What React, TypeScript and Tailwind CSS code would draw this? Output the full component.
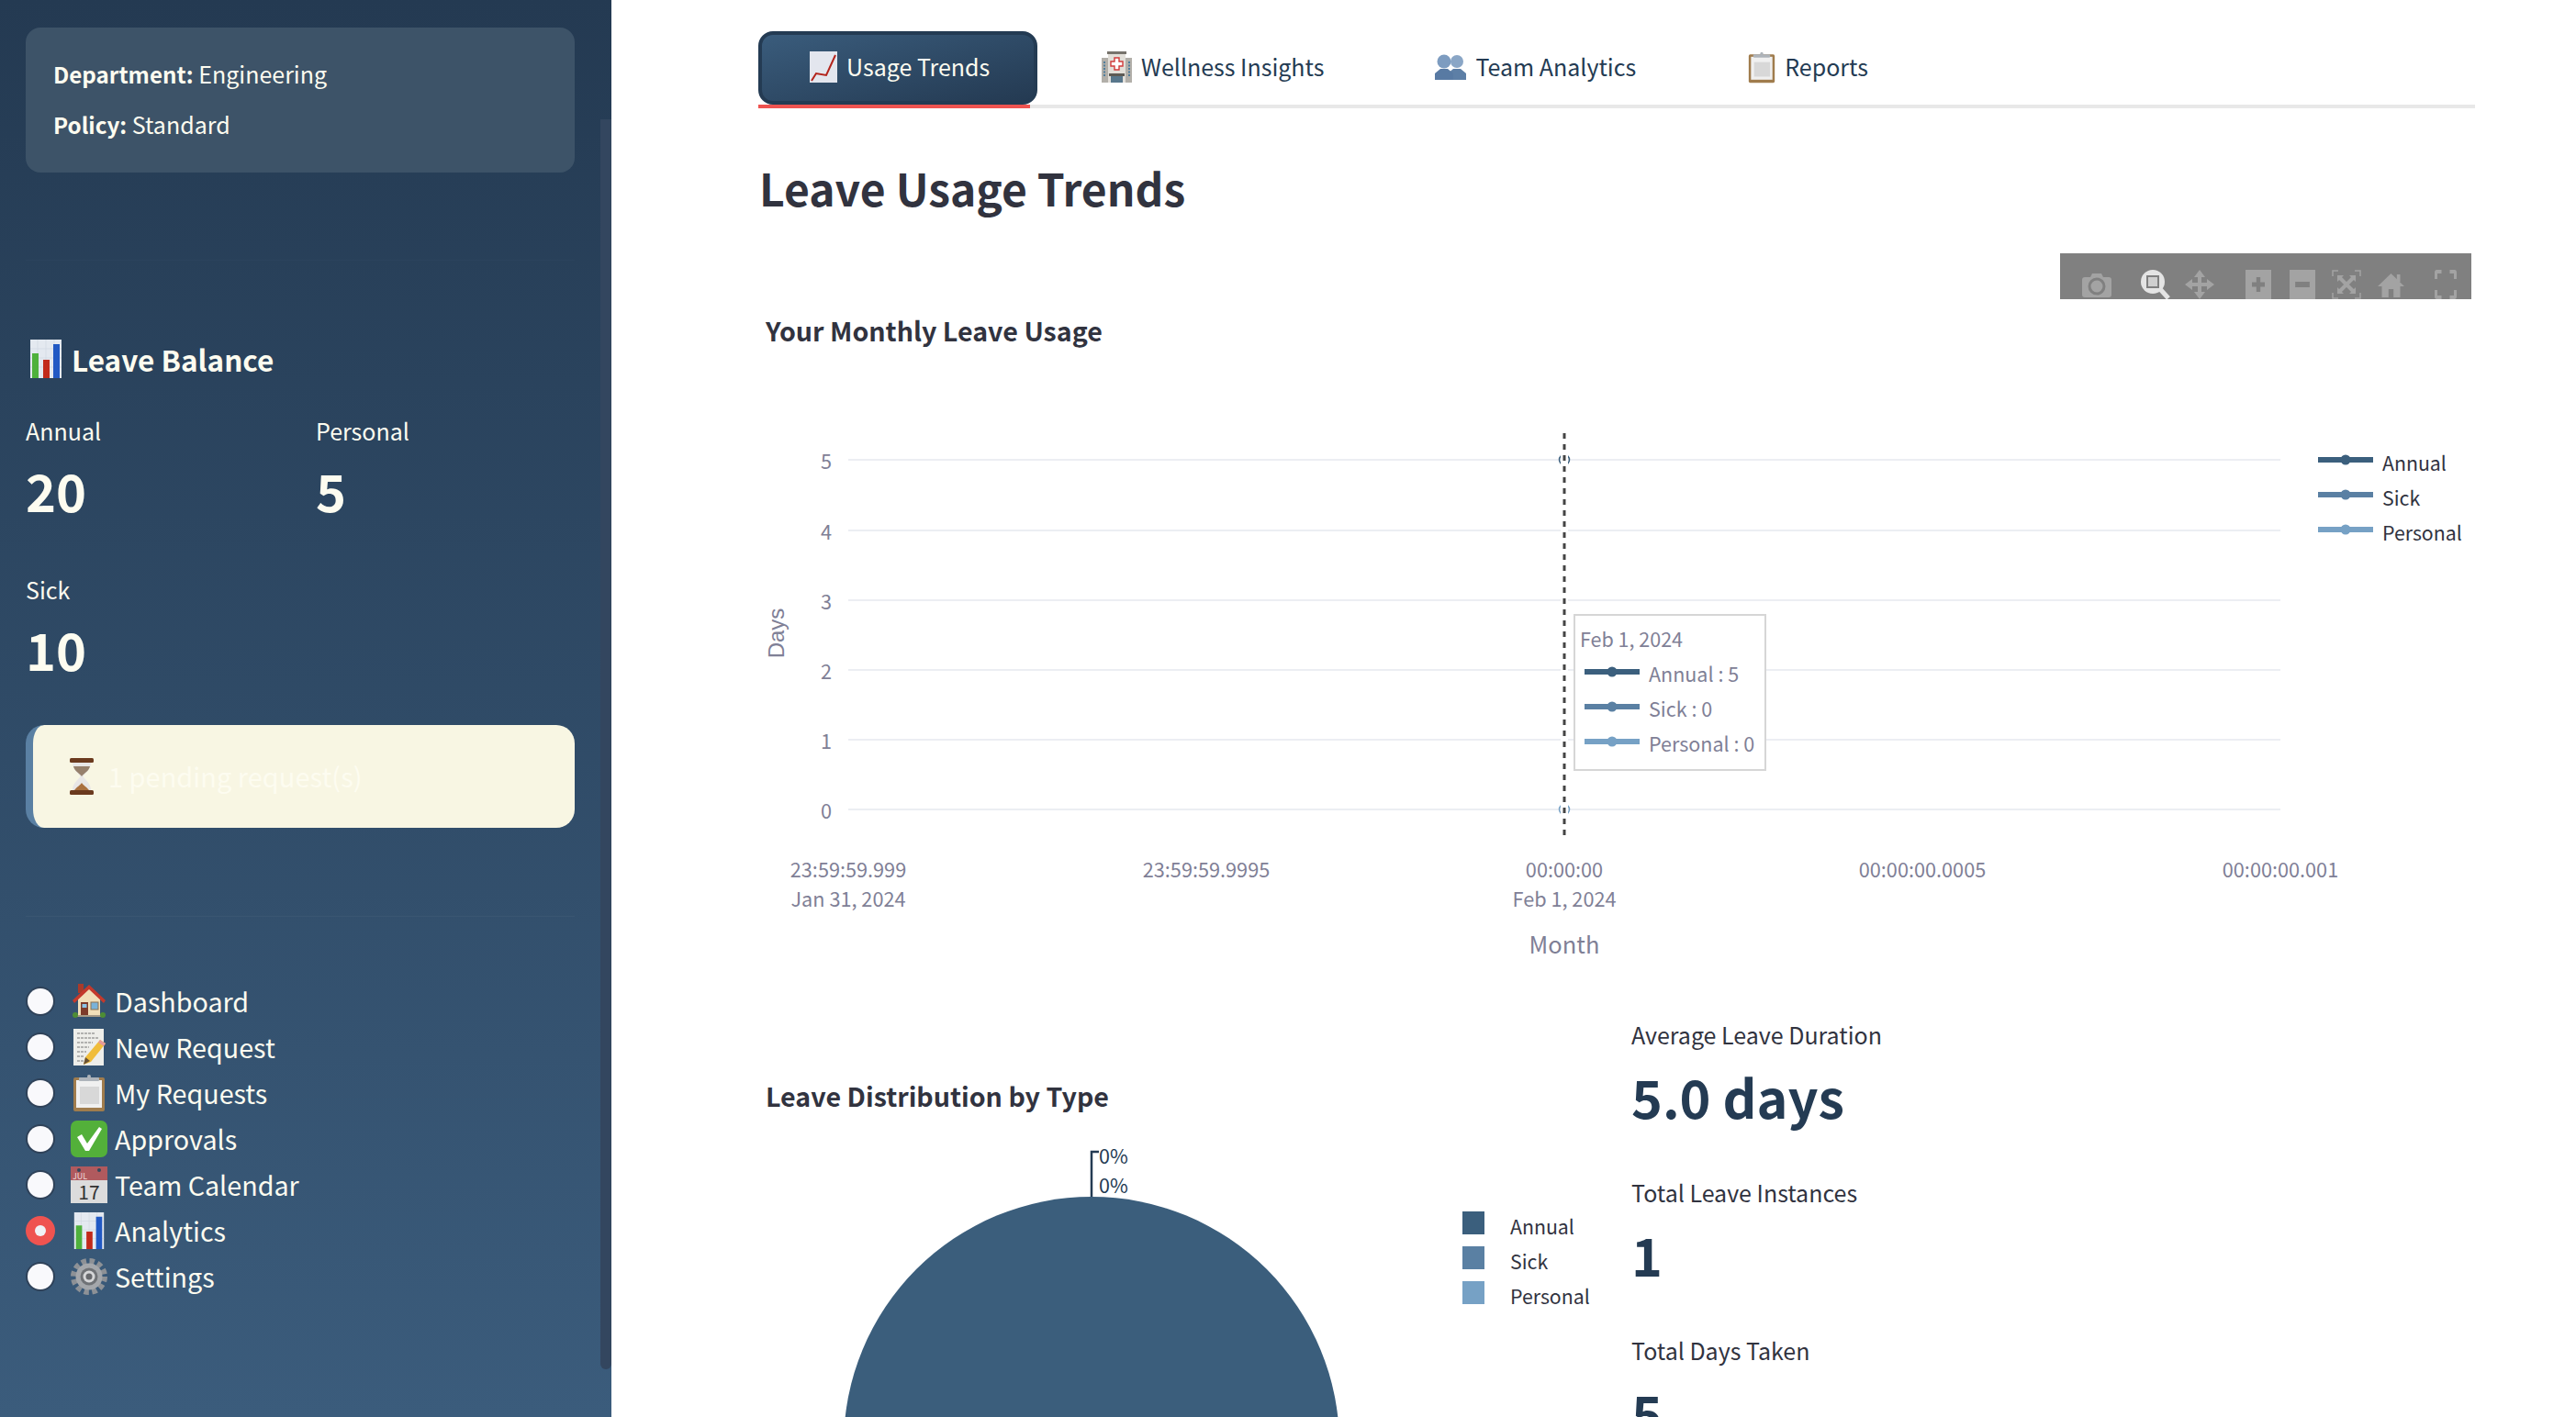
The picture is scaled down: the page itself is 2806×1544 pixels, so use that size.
const lineColors = ['#3b5f7d', '#5a80a3', '#76a1c5']

function BarsEmoji({ className }: { className: string }) {
  return (
    <svg viewBox="0 0 36 42" className={className}>
      <rect x="1" y="0" width="34" height="42" fill="#e4e9f0" />
      <path d="M1 10H35M1 20H35M1 30H35M9 0V42M18 0V42M27 0V42" stroke="#cfd6e0" strokeWidth="0.6" />
      <rect x="3" y="15" width="7" height="27" fill="#4fb13c" />
      <rect x="15" y="22" width="7" height="20" fill="#c22a1a" />
      <rect x="26" y="5" width="7" height="37" fill="#2159c4" />
    </svg>
  )
}

function Hourglass() {
  return (
    <svg viewBox="0 0 28 40" className="h-[40px] w-[28px] shrink-0">
      <path d="M4 5H24C24 13 17 17 15.5 20C17 23 24 27 24 35H4C4 27 11 23 12.5 20C11 17 4 13 4 5Z" fill="#e8e6e6" />
      <path d="M5 9H23C22 14 16 17 14 20C12 17 6 14 5 9Z" fill="#96806c" />
      <path d="M6 35C9 31 12 30 14 27C16 30 19 31 22 35Z" fill="#a9703f" />
      <rect x="1" y="0" width="26" height="5" rx="1.5" fill="#6b3a1e" />
      <rect x="1" y="35" width="26" height="5" rx="1.5" fill="#6b3a1e" />
    </svg>
  )
}

function House() {
  return (
    <svg viewBox="0 0 36 40" className="h-full w-full">
      <rect x="6" y="1" width="6" height="10" fill="#a93a2a" />
      <path d="M6 17L18 5L30 17V36H6Z" fill="#f2dfb9" />
      <path d="M18 2L0 19L2 22L18 7L34 22L36 19Z" fill="#c4392c" />
      <rect x="9" y="21" width="8" height="15" fill="#7d3b2a" />
      <rect x="10.5" y="23" width="5" height="4" fill="#8cc4e6" />
      <rect x="20" y="21" width="8" height="8" fill="#7ab2d8" stroke="#8d7350" />
      <rect x="5" y="35" width="26" height="2" fill="#a79a86" />
      <circle cx="3" cy="35" r="3" fill="#4d8d35" />
      <circle cx="33" cy="35" r="3" fill="#4d8d35" />
    </svg>
  )
}

function Memo() {
  return (
    <svg viewBox="0 0 36 40" className="h-full w-full">
      <rect x="1" y="0" width="33" height="40" fill="#eeeeea" />
      <path d="M5 5H25M5 10H28M5 15H22M5 20H18M5 25H15M5 30H13M5 35H12" stroke="#777" strokeWidth="1" strokeDasharray="3 1" />
      <path d="M30 12L36 16L20 36L12 39L14 31Z" fill="#f0bd3a" />
      <path d="M30 12L36 16L34 19L28 15Z" fill="#e59a9a" />
      <path d="M12 39L14 31L19 35Z" fill="#6b5335" />
    </svg>
  )
}

function Clipboard() {
  return (
    <svg viewBox="0 0 36 40" className="h-full w-full">
      <rect x="1" y="3" width="34" height="37" rx="2" fill="#a07c4d" />
      <rect x="4" y="6" width="28" height="30" fill="#f0f0f0" />
      <rect x="8" y="13" width="21" height="19" fill="#d8d8d8" />
      <rect x="7" y="3" width="22" height="4" rx="1" fill="#aeb4ba" />
      <circle cx="18" cy="2" r="2" fill="#aeb4ba" />
    </svg>
  )
}

function Check() {
  return (
    <svg viewBox="0 0 40 40" className="h-full w-full">
      <rect x="0" y="0" width="40" height="40" rx="7" fill="#53b03a" />
      <path d="M7 18L12 15L18 25L31 7L34 9L20 33H16Z" fill="#fff" />
    </svg>
  )
}

function Calendar() {
  return (
    <svg viewBox="0 0 40 40" className="h-full w-full">
      <rect width="40" height="40" fill="#dcdcdc" />
      <rect width="40" height="15" fill="#b05a5e" />
      <circle cx="9" cy="4" r="2" fill="#33485c" />
      <circle cx="31" cy="4" r="2" fill="#33485c" />
      <text x="2" y="14" className="fill-[#f0dcdc] text-[9px]">JUL</text>
      <text x="20" y="36" textAnchor="middle" className="fill-[#333] text-[21px]">17</text>
    </svg>
  )
}

function Gear() {
  return (
    <svg viewBox="0 0 40 40" className="h-full w-full">
      <circle cx="20" cy="20" r="16.5" fill="none" stroke="#8d9196" strokeWidth="7" strokeDasharray="5.2 3.44" />
      <circle cx="20" cy="20" r="14.5" fill="#a4a7ab" />
      <circle cx="20" cy="20" r="9.5" fill="#6f7276" />
      <circle cx="20" cy="20" r="6.5" fill="#d5d6d8" />
      <circle cx="20" cy="20" r="3.5" fill="#67696d" />
    </svg>
  )
}

function TrendEmoji() {
  return (
    <svg viewBox="0 0 30 34" className="h-[34px] w-[30px] shrink-0">
      <rect width="30" height="34" fill="#e3e6ee" />
      <path d="M2 32L7 24L18 26L28 4" fill="none" stroke="#b3241c" strokeWidth="2" />
    </svg>
  )
}

function Hospital() {
  return (
    <svg viewBox="0 0 33 34" className="h-[34px] w-[33px] shrink-0">
      <rect x="0" y="7" width="33" height="27" fill="#b2afa9" />
      <rect x="7" y="0" width="19" height="34" fill="#e2dfd9" />
      <rect x="6" y="0" width="21" height="3" fill="#77736c" />
      <path d="M14 7H19V11H23V16H19V20H14V16H10V11H14Z" fill="#fff" stroke="#d23b3b" strokeWidth="1.4" />
      <path d="M3 11V28M30 11V28" stroke="#4f7d9c" strokeWidth="2" strokeDasharray="2 1.5" />
      <rect x="8" y="24" width="17" height="3" fill="#5d5a55" />
      <rect x="10" y="27" width="13" height="7" fill="#58778c" />
    </svg>
  )
}

function Busts() {
  return (
    <svg viewBox="0 0 34 28" className="h-[28px] w-[34px] shrink-0">
      <circle cx="24" cy="8" r="7" fill="#8aa6c6" />
      <path d="M20 16H28L34 21V28H14V21Z" fill="#5d7fa6" />
      <circle cx="10" cy="8" r="7.5" fill="#7d9cc0" />
      <path d="M6 16H14L20 21V28H0V21Z" fill="#587aa3" />
    </svg>
  )
}

function ModeIcon({ w, className, children }: { w: string; className: string; children: React.ReactNode }) {
  return (
    <svg viewBox="0 0 32 32" className={`${w} ${className} h-[32px] shrink-0`} preserveAspectRatio="none">
      {children}
    </svg>
  )
}

function ModeBar() {
  return (
    <div className="mr-[4px] flex h-[50px] w-[448px] items-start overflow-hidden bg-[#808080] pt-[18px] pl-[24px]">
      <ModeIcon w="w-[32px]" className="">
        <path d="M3 8H9L11 4H21L23 8H29Q32 8 32 11V27Q32 30 29 30H3Q0 30 0 27V11Q0 8 3 8Z" fill="#a3a3a3" />
        <circle cx="16" cy="18" r="8" fill="none" stroke="#808080" strokeWidth="3" />
      </ModeIcon>
      <ModeIcon w="w-[32px]" className="ml-[32px]">
        <circle cx="13" cy="13" r="13" fill="#e4e4e4" />
        <rect x="6" y="6" width="14" height="14" fill="#808080" />
        <rect x="8" y="8" width="10" height="10" fill="#cfcfcf" />
        <path d="M21 21L30 31" stroke="#e4e4e4" strokeWidth="5" />
      </ModeIcon>
      <ModeIcon w="w-[32px]" className="ml-[16px]">
        <path d="M16 0L22 8H18V14H24V10L32 16L24 22V18H18V24H22L16 32L10 24H14V18H8V22L0 16L8 10V14H14V8H10Z" fill="#a3a3a3" />
      </ModeIcon>
      <ModeIcon w="w-[28px]" className="ml-[34px]">
        <rect width="32" height="32" fill="#a3a3a3" />
        <path d="M16 8V24M8 16H24" stroke="#808080" strokeWidth="5" />
      </ModeIcon>
      <ModeIcon w="w-[28px]" className="ml-[20px]">
        <rect width="32" height="32" fill="#a3a3a3" />
        <path d="M7 16H25" stroke="#808080" strokeWidth="6" />
      </ModeIcon>
      <ModeIcon w="w-[32px]" className="ml-[18px]">
        <path d="M1 7V1H7M25 1H31V7M31 25V31H25M7 31H1V25" fill="none" stroke="#a3a3a3" strokeWidth="1.5" />
        <path d="M8 8L24 24M24 8L8 24" stroke="#a3a3a3" strokeWidth="4" />
        <path d="M6 6H13L6 13ZM26 6V13L19 6ZM26 26H19L26 19ZM6 26V19L13 26Z" fill="#a3a3a3" />
      </ModeIcon>
      <ModeIcon w="w-[29px]" className="ml-[18px]">
        <path d="M16 4L32 18H27V30H19V21H13V30H5V18H0Z" fill="#a3a3a3" />
        <rect x="23" y="5" width="4" height="8" fill="#a3a3a3" />
      </ModeIcon>
      <ModeIcon w="w-[24px]" className="ml-[33px]">
        <path d="M2 10V3Q2 2 3 2H10M22 2H29Q30 2 30 3V10M30 22V29Q30 30 29 30H22M10 30H3Q2 30 2 29V22" fill="none" stroke="#a3a3a3" strokeWidth="4" />
      </ModeIcon>
    </div>
  )
}

function Stat({ label, value, className }: { label: string; value: string; className: string }) {
  return (
    <div className={className}>
      <div className="text-[25px] leading-[40px] text-[#fdfcf0]">{label}</div>
      <div className="mt-[5px] text-[56px] leading-[80px] font-bold text-[#fdfcf0]">{value}</div>
    </div>
  )
}

function NavRow({ label, active, children }: { label: string; active?: boolean; children: React.ReactNode }) {
  return (
    <div className="flex h-[50px] items-center">
      <div className="flex w-[32px] justify-center">
        {active ? (
          <div className="flex h-[32px] w-[32px] items-center justify-center rounded-full bg-[#ef5350]">
            <div className="h-[12px] w-[12px] rounded-full bg-[#f0f2f6]" />
          </div>
        ) : (
          <div className="h-[28px] w-[28px] rounded-full bg-[#f9f9fc] shadow-[0_0_0_2px_#2f4259]" />
        )}
      </div>
      <div className="ml-[17px] h-[40px] w-[40px] shrink-0">{children}</div>
      <span className="ml-[8px] text-[28.7px] leading-[40px] text-[#fdfcf0]">{label}</span>
    </div>
  )
}

function Sidebar() {
  return (
    <aside className="relative h-full w-[666px] shrink-0 bg-gradient-to-b from-[#243a52] to-[#3b5c7c] pt-[30px] pr-[40px] pl-[28px]">
      <div className="h-[158px] rounded-[16px] bg-[#3d5368] px-[30px] pt-[23px] text-[25px] leading-[54px] text-[#fdfcf0]">
        <div><span className="text-[24.2px] font-bold">Department:</span> Engineering</div>
        <div><span className="text-[24.2px] font-bold">Policy:</span> Standard</div>
      </div>
      <div className="mt-[95px] h-[1px] bg-[#2b435d]" />
      <div className="mt-[82px] flex items-center pl-[4px]">
        <BarsEmoji className="h-[42px] w-[36px] shrink-0" />
        <span className="ml-[10px] text-[31.5px] leading-[50px] font-semibold text-[#fdfcf0]">Leave Balance</span>
      </div>
      <div className="mt-[33px] grid grid-cols-2 gap-y-[48px]">
        <Stat label="Annual" value="20" className="" />
        <Stat label="Personal" value="5" className="ml-[17px]" />
        <Stat label="Sick" value="10" className="" />
      </div>
      <div className="mt-[43px] flex h-[112px] items-center rounded-[20px] border-l-[8px] border-[#5a80a3] bg-[#f8f6e3] pl-[39px]">
        <Hourglass />
        <span className="ml-[15px] text-[29px] text-[#fdfcf0]">1 pending request(s)</span>
      </div>
      <div className="mt-[96px] h-[1px] bg-[#3a5672]" />
      <div className="mt-[67px]">
        <NavRow label="Dashboard"><House /></NavRow>
        <NavRow label="New Request"><Memo /></NavRow>
        <NavRow label="My Requests"><Clipboard /></NavRow>
        <NavRow label="Approvals"><Check /></NavRow>
        <NavRow label="Team Calendar"><Calendar /></NavRow>
        <NavRow label="Analytics" active><BarsEmoji className="h-[40px] w-[40px]" /></NavRow>
        <NavRow label="Settings"><Gear /></NavRow>
      </div>
      {/* scrollbar thumb */}
      <div className="absolute top-[130px] right-0 h-[1362px] w-[12px] rounded-b-[6px] bg-[#33465f]" />
    </aside>
  )
}

function Tab({ label, active, className, children }: { label: string; active?: boolean; className: string; children: React.ReactNode }) {
  return (
    <div className={`${className} flex h-[80px] items-center gap-[10px] pb-[2px] ${active ? 'rounded-[16px] border-[4px] border-[#243b53] bg-gradient-to-br from-[#3a5c7c] to-[#243a52] text-[#fdfcf0]' : 'text-[#243b53]'}`}>
      {children}
      <span className="text-[25px]">{label}</span>
    </div>
  )
}

function LineKey({ x, y, color }: { x: number; y: number; color: string }) {
  return (
    <g>
      <line x1={x} x2={x + 60} y1={y} y2={y} stroke={color} strokeWidth={6} />
      <circle cx={x + 30} cy={y} r={5.5} fill={color} />
    </g>
  )
}

function TrendChart() {
  const grid = [
    { y: 501, label: '5' },
    { y: 578, label: '4' },
    { y: 654, label: '3' },
    { y: 730, label: '2' },
    { y: 806, label: '1' },
    { y: 882, label: '0' },
  ]
  const ticks = [
    { x: 924, top: '23:59:59.999', bottom: 'Jan 31, 2024' },
    { x: 1314, top: '23:59:59.9995' },
    { x: 1704, top: '00:00:00', bottom: 'Feb 1, 2024' },
    { x: 2094, top: '00:00:00.0005' },
    { x: 2484, top: '00:00:00.001' },
  ]
  return (
    <svg viewBox="827 420 1869 640" className="mt-[39px] h-[640px] w-[1869px]">
      {grid.map((g) => (
        <g key={g.y}>
          <line x1={924} x2={2484} y1={g.y} y2={g.y} stroke="#eceef3" strokeWidth={2} />
          <text x={906} y={g.y} textAnchor="end" dominantBaseline="central" className="fill-[#7f8096] text-[21.7px]">{g.label}</text>
        </g>
      ))}
      <circle cx={1704} cy={501} r={5.5} fill="none" stroke={lineColors[0]} strokeWidth={1.5} />
      <circle cx={1704} cy={882} r={5.5} fill="none" stroke={lineColors[2]} strokeWidth={1.5} />
      <line x1={1704} x2={1704} y1={472} y2={910} stroke="#fff" strokeWidth={8} />
      <line x1={1704} x2={1704} y1={472} y2={910} stroke="#444" strokeWidth={3} strokeDasharray="6 6" />
      {ticks.map((t) => (
        <g key={t.x} textAnchor="middle" className="fill-[#7f8096] text-[21.7px]">
          <text x={t.x} y={946} dominantBaseline="central">{t.top}</text>
          {t.bottom && <text x={t.x} y={978} dominantBaseline="central">{t.bottom}</text>}
        </g>
      ))}
      <text x={1704} y={1027} textAnchor="middle" dominantBaseline="central" className="fill-[#7f8096] text-[25.5px]">Month</text>
      <text transform="translate(845 690) rotate(-90)" textAnchor="middle" dominantBaseline="central" className="fill-[#7f8096] font-['Liberation_Sans',sans-serif] text-[24px]">Days</text>

      <rect x={1715} y={670} width={208} height={169} fill="#fff" stroke="#d6d6d6" strokeWidth={2} />
      <text x={1721} y={695} dominantBaseline="central" className="fill-[#7f8096] text-[21.5px]">Feb 1, 2024</text>
      {['Annual : 5', 'Sick : 0', 'Personal : 0'].map((s, i) => (
        <g key={s}>
          <LineKey x={1726} y={732 + i * 38} color={lineColors[i]} />
          <text x={1796} y={733 + i * 38} dominantBaseline="central" className="fill-[#7f8096] text-[21.5px]">{s}</text>
        </g>
      ))}

      {['Annual', 'Sick', 'Personal'].map((s, i) => (
        <g key={s}>
          <LineKey x={2525} y={501 + i * 38} color={lineColors[i]} />
          <text x={2595} y={503 + i * 38} dominantBaseline="central" className="fill-[#31333f] text-[21.3px]">{s}</text>
        </g>
      ))}
    </svg>
  )
}

function PieChart() {
  return (
    <svg viewBox="827 1230 950 314" className="h-[314px] w-[950px]">
      <circle cx={1189} cy={1574} r={270} fill="#3b5e7c" />
      <path d="M1197 1255H1189V1304" fill="none" stroke="#243b53" strokeWidth={2.5} />
      <text x={1197} y={1258} dominantBaseline="central" className="fill-[#243b53] text-[21.5px]">0%</text>
      <text x={1197} y={1290} dominantBaseline="central" className="fill-[#243b53] text-[21.5px]">0%</text>
      {['Annual', 'Sick', 'Personal'].map((s, i) => (
        <g key={s}>
          <rect x={1593} y={1320 + i * 38} width={24} height={25} fill={lineColors[i]} />
          <text x={1645} y={1335 + i * 38} dominantBaseline="central" className="fill-[#31333f] text-[21.3px]">{s}</text>
        </g>
      ))}
    </svg>
  )
}

function Metric({ label, value, className }: { label: string; value: string; className: string }) {
  return (
    <div className={className}>
      <div className="text-[25px] leading-[40px] text-[#31333f]">{label}</div>
      <div className="mt-[7px] text-[57.5px] leading-[80px] font-bold text-[#243b53]">{value}</div>
    </div>
  )
}

export default function App() {
  return (
    <div className="flex h-[1544px] w-[2806px] overflow-hidden bg-white font-['Noto_Sans_CJK_SC','Noto_Sans',sans-serif]">
      <Sidebar />
      <main className="min-w-0 flex-1 pr-[110px] pl-[160px]">
        <div className="relative mt-[34px] flex border-b-[4px] border-[#e8e8e8]">
          <Tab label="Usage Trends" active className="w-[304px] pl-[52px]"><TrendEmoji /></Tab>
          <Tab label="Wellness Insights" className="ml-[70px]"><Hospital /></Tab>
          <Tab label="Team Analytics" className="ml-[121px]"><Busts /></Tab>
          <Tab label="Reports" className="ml-[122px]"><div className="h-[35px] w-[30px] shrink-0"><Clipboard /></div></Tab>
          <div className="absolute top-[80px] left-0 h-[4px] w-[296px] bg-[#ef5350]" />
        </div>
        <div className="pl-[1px]">
          <h1 className="mt-[48px] text-[48px] leading-[76px] font-bold text-[#31333f]">Leave Usage Trends</h1>
          <div className="mt-[34px] flex justify-end"><ModeBar /></div>
          <h3 className="mt-[13px] pl-[7px] text-[28.6px] leading-[42px] font-bold text-[#31333f]">Your Monthly Leave Usage</h3>
          <TrendChart />
          <div className="flex">
            <div className="w-[950px] shrink-0">
              <h3 className="mt-[113px] pl-[7px] text-[28.6px] leading-[42px] font-bold text-[#31333f]">Leave Distribution by Type</h3>
              <div className="mt-[15px]"><PieChart /></div>
            </div>
            <div className="pt-[47px]">
              <Metric label="Average Leave Duration" value="5.0 days" className="" />
              <Metric label="Total Leave Instances" value="1" className="mt-[45px]" />
              <Metric label="Total Days Taken" value="5" className="mt-[45px]" />
            </div>
          </div>
        </div>
      </main>
    </div>
  )
}
